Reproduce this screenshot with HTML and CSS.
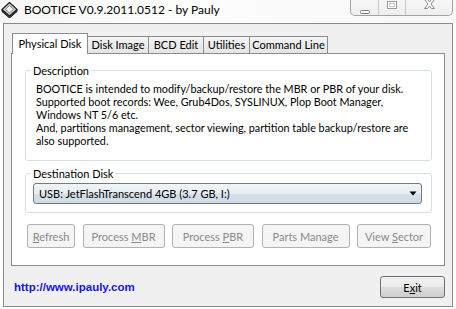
FILE: index.html
```html
<!DOCTYPE html>
<html>
<head>
<meta charset="utf-8">
<link rel="stylesheet" href="styles.css">
</head>
<body>
<header class="titlebar">
  <svg class="app-icon" width="17" height="17" viewBox="0 0 17 17">
    <polygon points="1,8.5 8.5,15 16,8.5 16,10.5 8.5,17 1,10.5" fill="#4a4a4a" stroke="#1a1a1a" stroke-width="1" stroke-linejoin="round"/>
    <polygon points="8.5,1.5 16,8.5 8.5,15 1,8.5" fill="#cfcfcf" stroke="#1a1a1a" stroke-width="1.1" stroke-linejoin="round"/>
    <polygon points="8.5,4.5 12.5,8.3 8.5,12 4.5,8.3" fill="#f4f4f4" stroke="#6a6a6a" stroke-width="0.8"/>
  </svg>
  <span class="title">BOOTICE V0.9.2011.0512 - by Pauly</span>
  <div class="caption-buttons">
    <span class="cap cap-min">
      <svg width="12" height="6" viewBox="0 0 12 6"><rect x="1.5" y="1.5" width="9" height="3" rx="1" fill="#fff" stroke="#7c7c7c"/></svg>
    </span>
    <span class="cap cap-max">
      <svg width="12" height="10" viewBox="0 0 12 10"><rect x="1.5" y="1.5" width="9" height="7" fill="#fff" stroke="#9a9a9a"/><rect x="3.5" y="3.5" width="5" height="3" fill="none" stroke="#c4c4c4"/></svg>
    </span>
    <span class="cap cap-close">
      <svg width="13" height="10" viewBox="0 0 13 10"><path d="M1.5 0.5 H4.5 L6.5 3 L8.5 0.5 H11.5 L8 5 L11.5 9.5 H8.5 L6.5 7 L4.5 9.5 H1.5 L5 5 Z" fill="#fff" stroke="#8a8a8a" stroke-linejoin="round"/></svg>
    </span>
  </div>
</header>

<div class="window">
  <nav class="tabs">
    <div class="tab tab-active w-phys">Physical Disk</div>
    <div class="tab w-img">Disk Image</div>
    <div class="tab w-bcd">BCD Edit</div>
    <div class="tab w-util">Utilities</div>
    <div class="tab w-cmd">Command Line</div>
  </nav>
  <section class="panel">
    <fieldset class="group group-desc">
      <legend>Description</legend>
      <p class="desc">BOOTICE is intended to modify/backup/restore the MBR or PBR of your disk.<br>Supported boot records: Wee, Grub4Dos, SYSLINUX, Plop Boot Manager,<br>Windows NT 5/6 etc.<br>And, partitions management, sector viewing, partition table backup/restore are<br>also supported.</p>
    </fieldset>
    <fieldset class="group group-dest">
      <legend>Destination Disk</legend>
      <div class="combo">
        <span class="combo-text">USB: JetFlashTranscend 4GB (3.7 GB, I:)</span>
        <svg width="8" height="5" viewBox="0 0 8 5"><polygon points="0.5,0.5 7.5,0.5 4,4.5" fill="#000"/></svg>
      </div>
    </fieldset>
    <div class="actions">
      <button class="btn w-refresh" disabled><u>R</u>efresh</button>
      <button class="btn w-mbr" disabled>Process <u>M</u>BR</button>
      <button class="btn w-pbr" disabled>Process <u>P</u>BR</button>
      <button class="btn w-parts" disabled>Parts Manage</button>
      <button class="btn w-view" disabled>View <u>S</u>ector</button>
    </div>
  </section>
  <footer class="footer">
    <a class="link" href="#">http://www.ipauly.com</a>
    <button class="btn btn-exit">E<u>x</u>it</button>
  </footer>
</div>
</body>
</html>
```

FILE: styles.css
```css
html, body {
  margin: 0;
  padding: 0;
}
body {
  width: 456px;
  height: 309px;
  overflow: hidden;
  background: #ffffff;
  font-family: Lato, "Noto Sans", sans-serif;
  font-size: 11px;
  color: #000;
}

/* ---------- title bar ---------- */
.titlebar {
  height: 23px;
  display: flex;
  align-items: flex-start;
  background: linear-gradient(90deg, #f6f6f6, #fdfdfd 40%, #f7f7f7);
}
.app-icon {
  margin: 1px 0 0 1px;
  flex: none;
}
.title {
  margin-left: 6px;
  line-height: 20px;
  font-size: 12px;
  color: #000;
  white-space: nowrap;
}
.caption-buttons {
  margin: -1px 3px 0 auto;
  display: flex;
  height: 17px;
  box-sizing: border-box;
  border: 1px solid #9ea3a8;
  border-top: none;
  border-radius: 0 0 5px 5px;
  background: linear-gradient(#f7f7f7, #eeeeee);
}
.cap {
  display: flex;
  justify-content: center;
  box-sizing: border-box;
}
.cap-min {
  width: 27px;
  align-items: flex-end;
}
.cap-max {
  width: 27px;
  border-left: 1px solid #c3c7cb;
  align-items: flex-start;
  padding-top: 1px;
}
.cap-close {
  width: 47px;
  border-left: 1px solid #c3c7cb;
  align-items: flex-start;
}

/* ---------- window ---------- */
.window {
  margin-left: 3px;
  width: 450px;
  height: 284px;
  box-sizing: border-box;
  border: 1px solid #8b8b8b;
  background: #f0f0f0;
  padding: 9px 7px 0;
}

.tabs {
  display: flex;
  align-items: flex-end;
  height: 20px;
  padding-left: 1px;
}
.tab {
  box-sizing: border-box;
  height: 17px;
  margin-left: -1px;
  border: 1px solid #898c95;
  border-bottom: none;
  background: linear-gradient(#f4f4f4, #e4e4e4);
  text-align: center;
  line-height: 16px;
  white-space: nowrap;
}
.tab:first-child {
  margin-left: 0;
}
.tab-active {
  height: 21px;
  margin-bottom: -1px;
  background: #ffffff;
  line-height: 19px;
  position: relative;
  z-index: 1;
}
.w-phys { width: 76px; }
.w-img { width: 62px; }
.w-bcd { width: 56px; }
.w-util { width: 47px; }
.w-cmd { width: 79px; }

.panel {
  height: 213px;
  box-sizing: border-box;
  border: 1px solid #898c95;
  background: #ffffff;
  padding: 0 12px 0 13px;
}

.group {
  margin: 0;
  min-width: 0;
  border: 1px solid #d5dfe5;
  border-radius: 3px;
}
.group legend {
  padding: 0 2px;
  line-height: 15px;
  color: #000;
}
.group-desc {
  margin-top: 9px;
  padding: 4px 9px 13px 10px;
}
.group-desc legend {
  margin-left: -5px;
}
.group-dest {
  margin-top: 5px;
  padding: 2px 9px 8px 7px;
}
.group-dest legend {
  margin-left: -2px;
}

.desc {
  margin: 0;
  font-size: 10.8px;
  line-height: 13px;
  white-space: nowrap;
}

.combo {
  height: 21px;
  box-sizing: border-box;
  border: 1px solid #6f7c88;
  border-radius: 3px;
  background: linear-gradient(#f1f5f8 0%, #e6ecf1 50%, #d6e0e8 51%, #cfdae3 100%);
  display: flex;
  align-items: center;
  justify-content: space-between;
  padding: 0 4px 0 5px;
}
.combo-text {
  white-space: nowrap;
  line-height: 19px;
}

.actions {
  margin: 11px 1px 0 2px;
  display: flex;
  justify-content: space-between;
}
.btn {
  box-sizing: border-box;
  height: 24px;
  padding: 0;
  font: inherit;
  border-radius: 3px;
  white-space: nowrap;
}
.btn[disabled] {
  border: 1px solid #adb2b5;
  background: #f4f4f4;
  color: #8a8a8a;
}
.w-refresh { width: 48px; }
.w-mbr { width: 82px; }
.w-pbr { width: 82px; }
.w-parts { width: 88px; }
.w-view { width: 74px; }

.footer {
  margin-top: 10px;
  display: flex;
  align-items: center;
  justify-content: space-between;
}
.link {
  margin-left: 3px;
  font-family: "Liberation Sans", Arial, sans-serif;
  font-weight: bold;
  font-size: 11.5px;
  color: #1414ee;
  text-decoration: none;
}
.btn-exit {
  width: 65px;
  height: 22px;
  border: 1px solid #707070;
  background: linear-gradient(#f2f2f2 0%, #ebebeb 50%, #dddddd 51%, #cfcfcf 100%);
  color: #000;
}
```
